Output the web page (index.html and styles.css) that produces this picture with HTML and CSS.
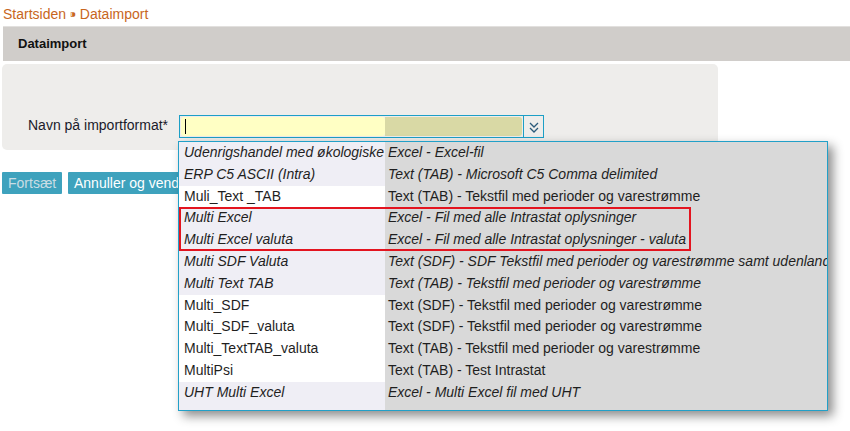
FILE: index.html
```
<!DOCTYPE html>
<html lang="da">
<head>
<meta charset="utf-8">
<title>Dataimport</title>
<link rel="stylesheet" href="styles.css">
</head>
<body>
<div class="breadcrumb"><a>Startsiden</a> <span class="sep">&#8269;</span> <a>Dataimport</a></div>
<div class="header">Dataimport</div>
<div class="panel">
  <div class="field">
    <label class="label">Navn på importformat*</label>
    <div class="combo">
      <div class="combo-input"><span class="caret"></span></div>
      <div class="combo-fill"></div>
      <div class="combo-btn">
        <svg width="12" height="14" viewBox="0 0 12 14"><path d="M2 3 L6 7 L10 3 M2 8 L6 12 L10 8" fill="none" stroke="#2b5a7a" stroke-width="1.3"/></svg>
      </div>
    </div>
  </div>
</div>
<div class="buttons">
  <button class="btn btn-disabled">Fortsæt</button>
  <button class="btn">Annuller og vend tilbage</button>
</div>

<div class="dropdown">
  <div class="row alt"><div class="c1 it">Udenrigshandel med økologiske</div><div class="c2 it">Excel - Excel-fil</div></div>
  <div class="row alt"><div class="c1 it">ERP C5 ASCII (Intra)</div><div class="c2 it">Text (TAB) - Microsoft C5 Comma delimited</div></div>
  <div class="row"><div class="c1">Muli_Text _TAB</div><div class="c2">Text (TAB) - Tekstfil med perioder og varestrømme</div></div>
  <div class="row alt"><div class="c1 it">Multi Excel</div><div class="c2 it">Excel - Fil med alle Intrastat oplysninger</div></div>
  <div class="row alt"><div class="c1 it">Multi Excel valuta</div><div class="c2 it">Excel - Fil med alle Intrastat oplysninger - valuta</div></div>
  <div class="row alt"><div class="c1 it">Multi SDF Valuta</div><div class="c2 it">Text (SDF) - SDF Tekstfil med perioder og varestrømme samt udenlandsk valuta</div></div>
  <div class="row alt"><div class="c1 it">Multi Text TAB</div><div class="c2 it">Text (TAB) - Tekstfil med perioder og varestrømme</div></div>
  <div class="row"><div class="c1">Multi_SDF</div><div class="c2">Text (SDF) - Tekstfil med perioder og varestrømme</div></div>
  <div class="row"><div class="c1">Multi_SDF_valuta</div><div class="c2">Text (SDF) - Tekstfil med perioder og varestrømme</div></div>
  <div class="row"><div class="c1">Multi_TextTAB_valuta</div><div class="c2">Text (TAB) - Tekstfil med perioder og varestrømme</div></div>
  <div class="row"><div class="c1">MultiPsi</div><div class="c2">Text (TAB) - Test Intrastat</div></div>
  <div class="row alt"><div class="c1 it">UHT Multi Excel</div><div class="c2 it">Excel - Multi Excel fil med UHT</div></div>
  <div class="rest"><div class="c1"></div><div class="c2"></div></div>
</div>
<div class="highlight"></div>
</body>
</html>
```
FILE: styles.css
```
html, body {
  margin: 0;
  padding: 0;
  background: #ffffff;
  font-family: "Liberation Sans", Arial, sans-serif;
  font-size: 14px;
  color: #1a1a1a;
  width: 850px;
  height: 431px;
  overflow: hidden;
}
.breadcrumb {
  height: 26px;
  line-height: 28px;
  padding-left: 3px;
  color: #c8661c;
  font-size: 14px;
  box-sizing: border-box;
}
.breadcrumb .sep {
  font-size: 9px;
  vertical-align: 2px;
}
.header {
  margin-left: 3px;
  height: 35px;
  box-sizing: border-box;
  border-top: 1px solid #e2e0de;
  background: #d0cdca;
  font-weight: bold;
  font-size: 13px;
  color: #111;
  padding-left: 15px;
  line-height: 34px;
}
.panel {
  margin: 3px 0 0 2px;
  width: 716px;
  height: 86px;
  background: #eeedeb;
  border-radius: 5px;
  box-sizing: border-box;
  padding-top: 51px;
}
.field {
  display: flex;
  align-items: center;
}
.label {
  width: 177px;
  padding-left: 26px;
  box-sizing: border-box;
  font-size: 14px;
  color: #1a1a2a;
  margin-bottom: 4px;
}
.combo {
  display: flex;
  width: 365px;
  height: 23px;
  border: 1px solid #1c9fc6;
  box-sizing: border-box;
  background: #eeedeb;
}
.combo-input {
  width: 204px;
  margin: 1px 0 1px 1px;
  background: #ffffc4;
  border-radius: 3px;
  display: flex;
  align-items: center;
  padding-left: 4px;
  box-sizing: border-box;
}
.caret {
  width: 1px;
  height: 15px;
  background: #000;
}
.combo-fill {
  width: 137px;
  margin: 1px 0;
  background: #d9d9a5;
  border-radius: 0 3px 3px 0;
}
.combo-btn {
  flex: 1;
  border-left: 1px solid #1c9fc6;
  margin-left: 1px;
  display: flex;
  align-items: center;
  justify-content: center;
}
.buttons {
  display: flex;
  gap: 6px;
  margin: 22px 0 0 2px;
}
.btn {
  height: 22px;
  border: none;
  background: #3ea2bd;
  color: #ffffff;
  font-family: "Liberation Sans", Arial, sans-serif;
  font-size: 14px;
  padding: 0 6px;
  border-radius: 1px;
  white-space: nowrap;
}
.btn-disabled {
  color: #c9dde4;
  width: 60px;
}
.dropdown {
  position: absolute;
  left: 178px;
  top: 141px;
  width: 650px;
  height: 270px;
  box-sizing: border-box;
  border: 1px solid #22a0c8;
  background: #d9d9d9;
  box-shadow: 5px 5px 10px rgba(0, 0, 0, 0.45);
  display: flex;
  flex-direction: column;
  overflow: hidden;
}
.row {
  display: flex;
  height: 21.8px;
  flex-shrink: 0;
  line-height: 21.8px;
  font-size: 14px;
  color: #1f1f1f;
}
.rest {
  display: flex;
  flex: 1;
}
.c1 {
  width: 206px;
  flex-shrink: 0;
  background: #ffffff;
  padding-left: 5px;
  box-sizing: border-box;
  white-space: nowrap;
  overflow: hidden;
}
.row.alt .c1 {
  background: #efeef5;
}
.rest .c1 {
  background: #efeef5;
}
.c2 {
  flex: 1;
  padding-left: 3px;
  white-space: nowrap;
  overflow: hidden;
  background: #d9d9d9;
}
.it {
  font-style: italic;
}
.highlight {
  position: absolute;
  left: 179px;
  top: 207px;
  width: 512px;
  height: 44px;
  box-sizing: border-box;
  border: 2px solid #e3141f;
}
```
